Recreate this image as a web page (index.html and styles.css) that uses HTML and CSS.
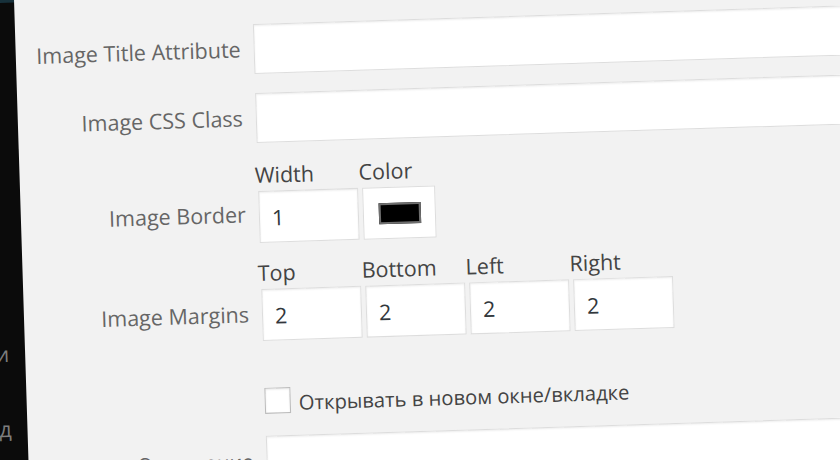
FILE: index.html
```html
<!DOCTYPE html>
<html lang="ru">

<head>
    <meta charset="UTF-8">
    <meta name="viewport" content="width=device-width, initial-scale=1.0">
    <title>Image Details</title>
    <link rel="stylesheet" href="styles.css">
</head>

<body>
    <div class="screen">
        <div class="admin-menu">
            <div class="menu-current"></div>
            <div class="menu-item item-first"><span>Пользователи</span></div>
            <div class="menu-item item-second"><span>Внешний вид</span></div>
        </div>

        <div class="modal">
            <div class="settings">
                <label class="setting-name name-middle">Image Title Attribute</label>
                <div class="setting-field"><input type="text" class="text-input"></div>

                <label class="setting-name name-middle">Image CSS Class</label>
                <div class="setting-field"><input type="text" class="text-input"></div>

                <label class="setting-name name-group">Image Border</label>
                <div class="setting-field field-group group-border">
                    <div class="sub-field">
                        <span class="sub-label">Width</span>
                        <input type="text" class="small-input" value="1">
                    </div>
                    <div class="sub-field">
                        <span class="sub-label">Color</span>
                        <div class="color-box"><span class="color-swatch"></span></div>
                    </div>
                </div>

                <label class="setting-name name-group">Image Margins</label>
                <div class="setting-field field-group group-margins">
                    <div class="sub-field">
                        <span class="sub-label">Top</span>
                        <input type="text" class="small-input" value="2">
                    </div>
                    <div class="sub-field">
                        <span class="sub-label">Bottom</span>
                        <input type="text" class="small-input" value="2">
                    </div>
                    <div class="sub-field">
                        <span class="sub-label">Left</span>
                        <input type="text" class="small-input" value="2">
                    </div>
                    <div class="sub-field">
                        <span class="sub-label">Right</span>
                        <input type="text" class="small-input" value="2">
                    </div>
                </div>

                <span class="setting-name"></span>
                <div class="setting-field check-row">
                    <span class="check-box"></span>
                    <span class="check-label">Открывать в новом окне/вкладке</span>
                </div>

                <label class="setting-name name-middle name-ru">Отношение</label>
                <div class="setting-field"><input type="text" class="text-input"></div>
            </div>
        </div>
    </div>
</body>

</html>
```

FILE: styles.css
```css
html,
body {
    margin: 0;
    padding: 0;
    overflow: hidden;
}

body {
    background-color: #0b0b0b;
    font-family: "Open Sans", "Noto Sans", sans-serif;
    font-size: 21.5px;
}

/* the whole shot is tilted a little */
.screen {
    display: flex;
    width: 1040px;
    height: 540px;
    margin-left: -40px;
    transform-origin: 40px 0;
    transform: rotate(-1.8deg);
}

.admin-menu {
    width: 54px;
    flex-shrink: 0;
    background-color: #0b0b0b;
    overflow: hidden;
}

.menu-current {
    height: 3px;
    background-color: #17313b;
}

.menu-item {
    display: flex;
    justify-content: flex-end;
    padding-right: 16px;
    height: 28px;
    line-height: 28px;
    color: #7d7d7d;
    white-space: nowrap;
}

.item-first {
    margin-top: 337px;
}

.item-second {
    margin-top: 47px;
}

.modal {
    flex: 1;
    background-color: #f2f2f2;
    padding-top: 32px;
}

.settings {
    display: grid;
    grid-template-columns: 225px 1fr;
    column-gap: 13px;
    row-gap: 19px;
}

.setting-name {
    text-align: right;
    color: #666;
    line-height: 28px;
    white-space: nowrap;
}

.name-middle {
    align-self: center;
}

.name-group {
    align-self: start;
    padding-top: 38px;
}

.name-ru {
    font-size: 20.2px;
}

.text-input {
    display: block;
    box-sizing: border-box;
    width: 100%;
    height: 50px;
    margin: 0;
    border: 1px solid #ddd;
    background-color: #fff;
    box-shadow: inset 0 1px 2px rgba(0, 0, 0, 0.07);
}

.field-group {
    display: flex;
    gap: 4px;
}

.group-border {
    margin-top: -1px;
}

.group-margins {
    margin-top: -3px;
}

.sub-field {
    display: flex;
    flex-direction: column;
}

.sub-label {
    color: #444;
    line-height: 28px;
    margin-left: -3px;
    margin-bottom: 2px;
}

.small-input {
    box-sizing: border-box;
    width: 100px;
    height: 52px;
    margin: 0;
    padding: 0 12px;
    border: 1px solid #ddd;
    background-color: #fff;
    box-shadow: inset 0 1px 2px rgba(0, 0, 0, 0.07);
    font-family: "Open Sans", sans-serif;
    font-size: 21.5px;
    color: #32373c;
}

.color-box {
    display: flex;
    align-items: center;
    justify-content: center;
    box-sizing: border-box;
    width: 73px;
    height: 52px;
    border: 1px solid #ddd;
    background-color: #fff;
}

.color-swatch {
    box-sizing: border-box;
    width: 42px;
    height: 21px;
    background-color: #000;
    border: 2px solid #6e6e6e;
}

.check-row {
    display: flex;
    align-items: center;
    gap: 8px;
    margin-top: 29px;
}

.check-box {
    box-sizing: border-box;
    width: 26px;
    height: 26px;
    margin-top: -4px;
    border: 1px solid #bbb;
    background-color: #fff;
    box-shadow: inset 0 1px 2px rgba(0, 0, 0, 0.1);
}

.check-label {
    color: #444;
    font-size: 20.2px;
    line-height: 28px;
}
```
